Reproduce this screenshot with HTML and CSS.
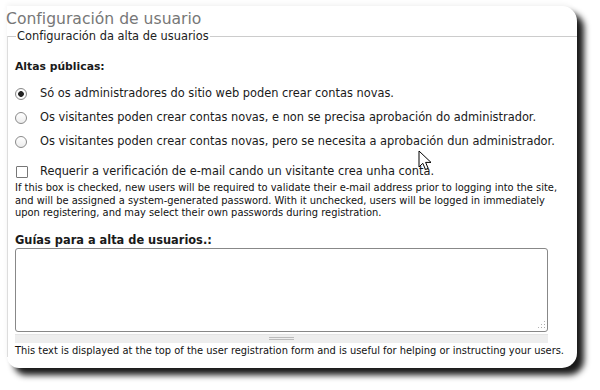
FILE: index.html
```html
<!DOCTYPE html>
<html lang="gl">
<head>
  <meta charset="UTF-8">
  <title>Configuración de usuario</title>
  <link rel="stylesheet" href="styles.css">
</head>
<body>

  <!-- settings card -->
  <div class="card">
    <h2 class="title">Configuración de usuario</h2>

    <fieldset class="group">
      <legend>Configuración da alta de usuarios</legend>

      <div class="item">
        <div class="item-label">Altas públicas:</div>
        <div class="radios">
          <label class="option"><input type="radio" name="reg" checked> Só os administradores do sitio web poden crear contas novas.</label>
          <label class="option"><input type="radio" name="reg"> Os visitantes poden crear contas novas, e non se precisa aprobación do administrador.</label>
          <label class="option"><input type="radio" name="reg"> Os visitantes poden crear contas novas, pero se necesita a aprobación dun administrador.</label>
        </div>
      </div>

      <div class="item">
        <label class="option check"><input type="checkbox"> Requerir a verificación de e-mail cando un visitante crea unha conta.</label>
        <div class="desc first">If this box is checked, new users will be required to validate their e-mail address prior to logging into the site,<br>and will be assigned a system-generated password. With it unchecked, users will be logged in immediately<br>upon registering, and may select their own passwords during registration.</div>
      </div>

      <div class="item">
        <div class="item-label big">Guías para a alta de usuarios.:</div>
        <div class="resizable">
          <textarea rows="5"></textarea>
          <div class="grippie"></div>
        </div>
        <div class="desc">This text is displayed at the top of the user registration form and is useful for helping or instructing your users.</div>
      </div>
    </fieldset>
  </div>

  <!-- mouse pointer captured in the shot -->
  <svg class="pointer" width="16" height="21" viewBox="0 0 16 21">
    <path d="M1 1 L1 17 L4.8 13.3 L7.5 19.5 L10.2 18.4 L7.6 12.4 L13 12.4 Z" fill="#fff" stroke="#000" stroke-width="1" stroke-linejoin="round"/>
  </svg>

</body>
</html>
```

FILE: styles.css
```css
/* page */
html, body {
  margin: 0;
  padding: 0;
  background: #fff;
  font-family: "DejaVu Sans", Verdana, sans-serif;
  color: #1a1a1a;
  overflow: hidden;
}

body {
  position: relative;
  width: 600px;
  height: 390px;
}

/* the white card with its heavy drop shadow */
.card {
  margin: 6px 0 0 7px;
  width: 570px;
  height: 362px;
  box-sizing: border-box;
  background: #fff;
  border-radius: 0 15px 15px 12px;
  box-shadow:
    7px 7px 6px rgba(0, 0, 0, 0.9),
    0 -2px 5px rgba(0, 0, 0, 0.05);
  padding-top: 3px;
}

.title {
  margin: 0 0 0 -1px;
  font-size: 15.6px;
  line-height: 20px;
  font-weight: normal;
  color: #777;
}

/* fieldset */
.group {
  margin: 0;
  padding: 0 0 0 7px;
  border: 1px solid #ccc;
  border-right: none;
  border-bottom: none;
  border-left-color: #ddd;
  min-width: 0;
}

.group legend {
  padding: 0 1px;
  margin-left: 1px;
  font-size: 11.4px;
  line-height: 14px;
  color: #222;
}

.item {
  font-size: 11.4px;
}

.item-label {
  font-weight: bold;
  font-size: 10.8px;
  margin: 17px 0 14px;
}

.item-label.big {
  font-size: 11.4px;
  margin: 13px 0 1px;
}

.radios {
  display: flex;
  flex-direction: column;
  gap: 11px;
}

.option {
  display: flex;
  align-items: center;
  gap: 13px;
  white-space: nowrap;
  line-height: 13px;
}

.option input {
  -webkit-appearance: none;
  appearance: none;
  margin: 0;
  width: 12px;
  height: 12px;
  border: 1px solid #8a8a8a;
  border-radius: 50%;
  background: linear-gradient(#fff, #ececec);
  box-sizing: border-box;
}

.option input:checked {
  background: radial-gradient(circle, #222 0 2.5px, #fff 3.2px, #ececec 100%);
}

.option.check {
  margin-top: 17px;
}

.option.check input {
  width: 12px;
  height: 12px;
  margin-left: 1px;
  margin-right: -1px;
  border-radius: 1px;
  border-color: #777;
  background: #fff;
}

.desc {
  font-size: 9.9px;
  line-height: 12.5px;
  white-space: nowrap;
  color: #111;
}

.desc.first {
  margin-top: 4px;
}

/* textarea with the drupal grippie bar */
.resizable {
  position: relative;
  width: 533px;
}

.resizable textarea {
  display: block;
  width: 533px;
  height: 84px;
  box-sizing: border-box;
  margin: 0;
  border: 1px solid #888;
  border-radius: 3px;
  resize: none;
  font-family: inherit;
}

.resizable::after {
  content: "";
  position: absolute;
  right: 2px;
  top: 72px;
  width: 9px;
  height: 9px;
  background: radial-gradient(circle, #aaa 0.6px, transparent 0.8px) 0 0 / 3px 3px;
  clip-path: polygon(100% 0, 100% 100%, 0 100%);
}

.grippie {
  height: 8px;
  margin-top: 2px;
  background: #eee;
  border-top: 1px solid #e4e4e4;
  position: relative;
}

.grippie::after {
  content: "";
  position: absolute;
  left: 254px;
  top: 2px;
  width: 25px;
  height: 3px;
  border-top: 1px solid #bbb;
  border-bottom: 1px solid #bbb;
  box-sizing: border-box;
}

.resizable + .desc {
  margin-top: 2px;
}

/* screenshot mouse pointer */
.pointer {
  position: absolute;
  left: 418px;
  top: 150px;
}
```
